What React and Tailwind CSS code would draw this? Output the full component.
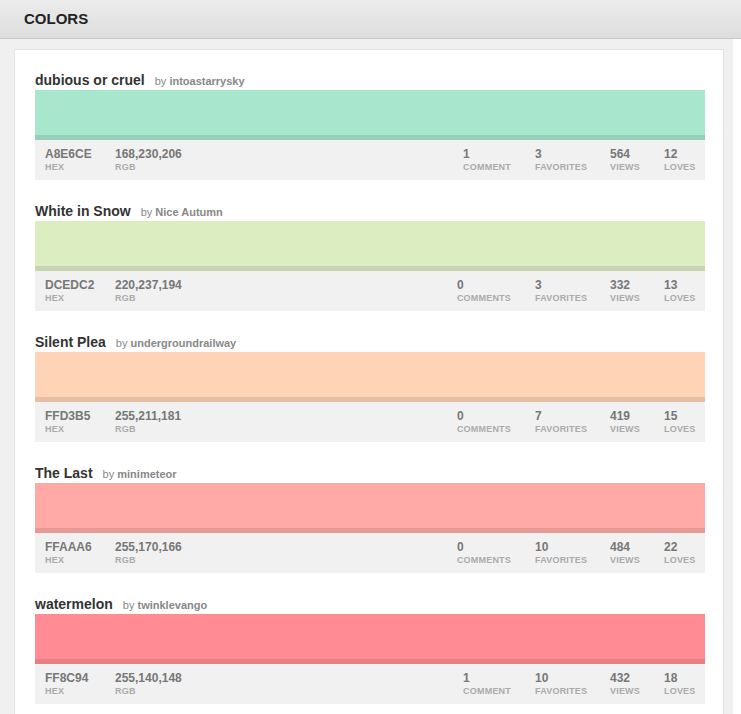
import React from "react";

const colors = [
  { name: "dubious or cruel", by: "intoastarrysky", hex: "A8E6CE", rgb: [168, 230, 206], comments: 1, favorites: 3, views: 564, loves: 12 },
  { name: "White in Snow", by: "Nice Autumn", hex: "DCEDC2", rgb: [220, 237, 194], comments: 0, favorites: 3, views: 332, loves: 13 },
  { name: "Silent Plea", by: "undergroundrailway", hex: "FFD3B5", rgb: [255, 211, 181], comments: 0, favorites: 7, views: 419, loves: 15 },
  { name: "The Last", by: "minimeteor", hex: "FFAAA6", rgb: [255, 170, 166], comments: 0, favorites: 10, views: 484, loves: 22 },
  { name: "watermelon", by: "twinklevango", hex: "FF8C94", rgb: [255, 140, 148], comments: 1, favorites: 10, views: 432, loves: 18 },
];

// darker band under the swatch
const shade = (rgb) => `rgb(${rgb.map((c) => Math.round(c * 0.9)).join(",")})`;

const Stat = ({ value, label, className = "" }) => (
  <div className={className}>
    <div className="text-[12px] leading-[14px] font-bold text-[#777]">{value}</div>
    <div className="mt-[1px] text-[9px] leading-[11px] font-bold text-[#aaa] uppercase tracking-[0.2px]">{label}</div>
  </div>
);

const ColorItem = ({ c, first }) => (
  <div className={first ? "pt-[23px]" : "pt-[24px]"}>
    <div className="flex items-baseline h-[15px] leading-[15px] mb-[2px]">
      <span className="text-[14px] font-bold text-[#333]">{c.name}</span>
      <span className="ml-[10px] text-[11px] text-[#888]">
        by <span className="font-bold">{c.by}</span>
      </span>
    </div>
    <div className="h-[45px]" style={{ backgroundColor: "#" + c.hex }} />
    <div className="h-[5px]" style={{ backgroundColor: shade(c.rgb) }} />
    <div className="h-[40px] bg-[#f1f1f1] flex pt-[7px] pl-[10px]">
      <Stat value={c.hex} label="Hex" className="w-[70px]" />
      <Stat value={c.rgb.join(",")} label="RGB" />
      <div className="ml-auto flex">
        <Stat value={c.comments} label={c.comments === 1 ? "Comment" : "Comments"} className="mr-[24px]" />
        <Stat value={c.favorites} label="Favorites" className="w-[75px]" />
        <Stat value={c.views} label="Views" className="w-[54px]" />
        <Stat value={c.loves} label="Loves" className="w-[41px]" />
      </div>
    </div>
  </div>
);

export default function App() {
  return (
    <div className="w-[741px] h-[714px] overflow-hidden bg-white" style={{ fontFamily: '"Liberation Sans", Arial, sans-serif' }}>
      <div className="h-[39px] bg-gradient-to-b from-[#ececec] to-[#dddddd] border-b border-[#c8c8c8] flex items-center pl-[24px]">
        <h1 className="text-[15px] font-bold text-[#222]">COLORS</h1>
      </div>
      <div className="w-[733px] bg-[#f0f0f0] pt-[10px] pl-[14px] h-[675px]">
        <div className="w-[710px] bg-white border border-[#e2e2e2] pl-[20px] pr-[18px] pb-[20px]">
          {colors.map((c, i) => (
            <ColorItem key={c.hex} c={c} first={i === 0} />
          ))}
        </div>
      </div>
    </div>
  );
}
